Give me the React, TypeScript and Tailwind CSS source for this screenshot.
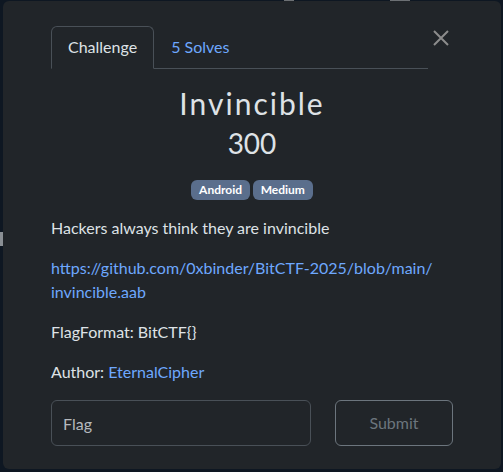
import React, { useState } from 'react';

const App: React.FC = () => {
  const [flag, setFlag] = useState<string>('');

  return (
    <div className="relative w-[503px] h-[472px] bg-[#0e1722] overflow-hidden" style={{ fontFamily: 'Lato, "Noto Sans", sans-serif' }}>
      {/* bits of the page behind the modal */}
      <div className="absolute left-0 top-[232px] w-[3px] h-[14px] bg-[#8a8f94]" />
      <div className="absolute left-[284px] top-0 w-[10px] h-[1px] bg-[#6c7074]" />
      <div className="absolute left-[390px] top-0 w-[20px] h-[1px] bg-[#6c7074]" />

      <div className="absolute left-[3px] top-[1px] w-[498px] h-[468px] rounded-[6px] bg-[#212529] px-[48px] pt-[25px] text-[#dee2e6]">
        {/* header: tabs + close */}
        <div className="flex items-start">
          <div className="flex w-[377px] border-b border-[#495057]">
            <div className="-mb-px px-4 py-2 border border-[#495057] border-b-[#212529] rounded-t-[6px] text-base leading-6 text-[#dee2e6]">
              Challenge
            </div>
            <div className="px-4 py-2 border border-transparent text-base leading-6 text-[#6ea8fe]">5 Solves</div>
          </div>
          <button className="ml-[5px] mt-[4px] w-4 h-4 flex items-center justify-center text-[#8c8c8c]" aria-label="Close">
            <svg width="16" height="16" viewBox="0 0 16 16" fill="none" stroke="currentColor" strokeWidth="2">
              <path d="M1 1 L15 15 M15 1 L1 15" />
            </svg>
          </button>
        </div>

        {/* title block */}
        <div className="flex flex-col items-center mt-[16px]">
          <h3 className="text-[30px] leading-[36px] font-normal tracking-[2px] text-[#dee2e6]">Invincible</h3>
          <h4 className="mt-[5px] text-[28px] leading-[34px] font-normal text-[#dee2e6]">300</h4>
          <div className="flex gap-[3px] mt-[20px]">
            <span className="px-[7.8px] py-[4.2px] rounded-[6px] bg-[#5a6e8c] text-white text-[12px] leading-[12px] font-bold">Android</span>
            <span className="px-[7.8px] py-[4.2px] rounded-[6px] bg-[#5a6e8c] text-white text-[12px] leading-[12px] font-bold">Medium</span>
          </div>
        </div>

        {/* description */}
        <div className="mt-[16px] mb-[2px] text-base leading-6 text-[#dee2e6]">
          <p className="mb-4">Hackers always think they are invincible</p>
          <p className="mb-4">
            <a href="#" className="text-[#6ea8fe]">
              https://github.com/0xbinder/BitCTF-2025/blob/main/<wbr />invincible.aab
            </a>
          </p>
          <p className="mb-4">FlagFormat: BitCTF{'{}'}</p>
          <p className="mb-4">
            Author: <a href="#" className="text-[#6ea8fe]">EternalCipher</a>
          </p>
        </div>

        {/* flag form */}
        <div className="flex gap-6">
          <input
            type="text"
            value={flag}
            onChange={(e) => setFlag(e.target.value)}
            placeholder="Flag"
            className="w-[260px] h-[46px] px-[11px] rounded-[6px] border border-[#495057] bg-[#212529] text-base text-[#dee2e6] placeholder:text-[#b5b9bd] outline-none"
          />
          <button className="w-[118px] h-[46px] rounded-[6px] border border-[#6c757d] text-base text-[#6c757d]">
            Submit
          </button>
        </div>
      </div>
    </div>
  );
};

export default App;
